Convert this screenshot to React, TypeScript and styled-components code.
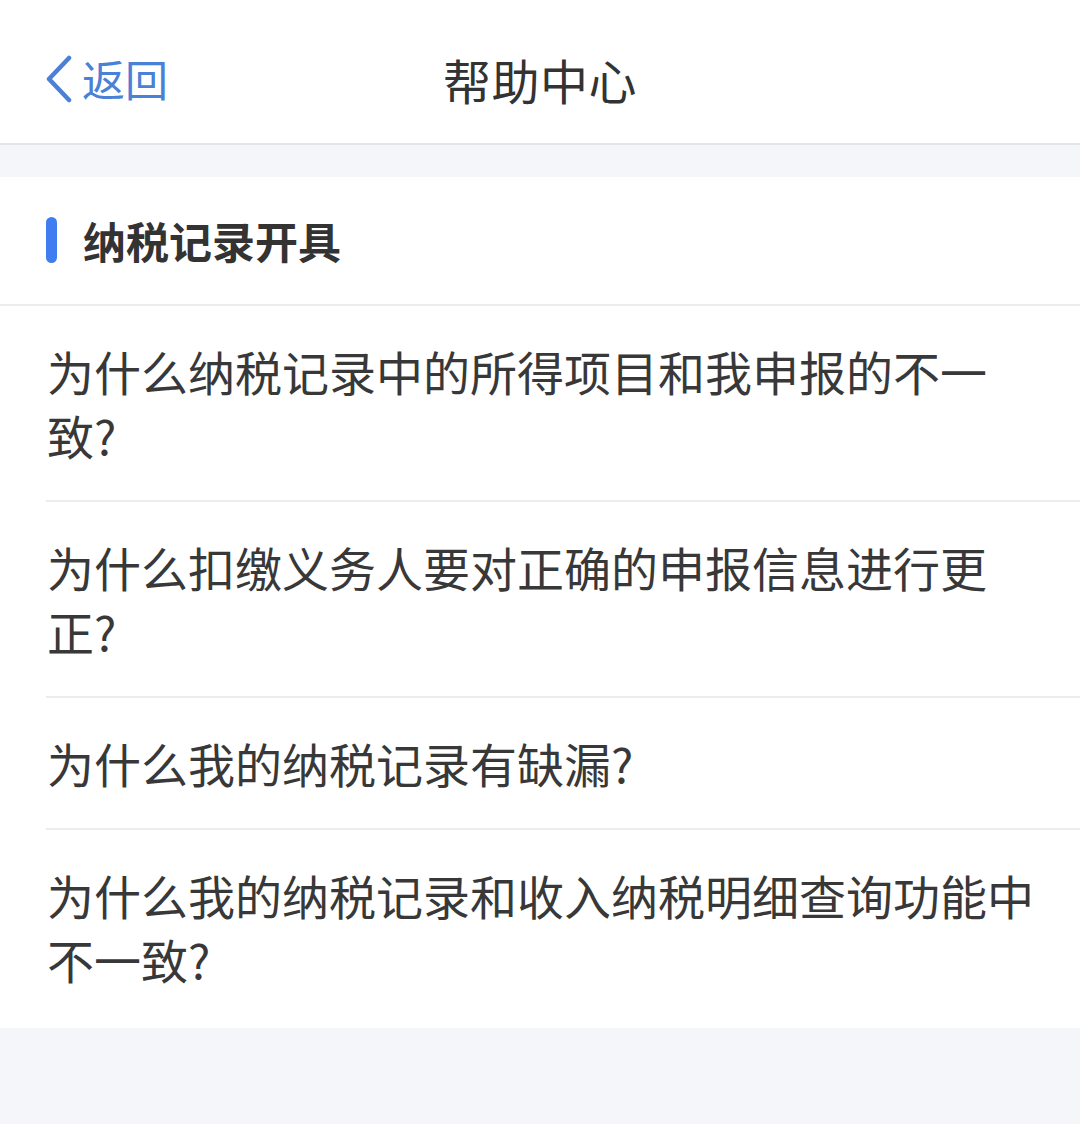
import React from "react";
import styled, { createGlobalStyle } from "styled-components";

const Global = createGlobalStyle`
  html, body { margin: 0; padding: 0; background: #f4f6f9; }
  body { font-family: "Noto Sans CJK SC", "Noto Sans", sans-serif; }
  * { box-sizing: border-box; }
`;

const Page = styled.div`
  width: 1080px;
  min-height: 1124px;
  background: #f4f6f9;
  display: flex;
  flex-direction: column;
`;

const NavBar = styled.header`
  height: 145px;
  background: #ffffff;
  border-bottom: 2px solid #e3e5e9;
  display: grid;
  grid-template-columns: 1fr auto 1fr;
  align-items: center;
  padding-top: 14px;
`;

const BackButton = styled.div`
  display: flex;
  align-items: center;
  gap: 8px;
  padding-left: 44px;
  color: #4a80d6;
  font-size: 43px;
  line-height: 1;
`;

const Title = styled.h1`
  margin: 0;
  font-size: 48px;
  font-weight: 400;
  line-height: 1;
  color: #333333;
  letter-spacing: 0.5px;
`;

const Gap = styled.div`
  height: 32px;
`;

const Section = styled.section`
  background: #ffffff;
  display: flex;
  flex-direction: column;
`;

const SectionHead = styled.div`
  height: 129px;
  display: flex;
  align-items: center;
  gap: 26px;
  padding: 0 0 2px 46px;
  border-bottom: 2px solid #ececee;
`;

const Bar = styled.span`
  width: 11px;
  height: 46px;
  border-radius: 6px;
  background: #3f7df0;
`;

const HeadText = styled.h2`
  margin: 0;
  font-size: 43px;
  font-weight: 700;
  color: #333333;
`;

const List = styled.div`
  padding-left: 46px;
`;

const Item = styled.div<{ $last?: boolean }>`
  padding: 33px 40px ${(p) => (p.$last ? "37px" : "33px")} 1px;
  font-size: 47px;
  line-height: 64px;
  color: #383838;
  border-bottom: ${(p) => (p.$last ? "none" : "2px solid #ececee")};
`;

const questions = [
  "为什么纳税记录中的所得项目和我申报的不一致?",
  "为什么扣缴义务人要对正确的申报信息进行更正?",
  "为什么我的纳税记录有缺漏?",
  "为什么我的纳税记录和收入纳税明细查询功能中不一致?",
];

export default function App() {
  return (
    <Page>
      <Global />
      <NavBar>
        <BackButton>
          <svg width="30" height="48" viewBox="0 0 30 48" fill="none">
            <path d="M25 3 L5 24 L25 45" stroke="#4a80d6" strokeWidth="4.5" strokeLinecap="round" strokeLinejoin="round" />
          </svg>
          <span>返回</span>
        </BackButton>
        <Title>帮助中心</Title>
        <div />
      </NavBar>
      <Gap />
      <Section>
        <SectionHead>
          <Bar />
          <HeadText>纳税记录开具</HeadText>
        </SectionHead>
        <List>
          {questions.map((q, i) => (
            <Item key={i} $last={i === questions.length - 1}>
              {q}
            </Item>
          ))}
        </List>
      </Section>
    </Page>
  );
}
